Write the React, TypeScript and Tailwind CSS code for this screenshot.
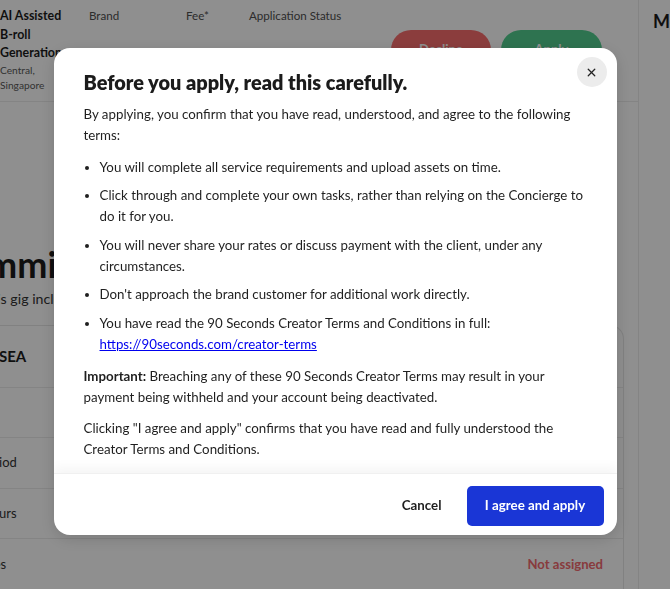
import { X } from "lucide-react";

const bullets = [
  "You will complete all service requirements and upload assets on time.",
  "Click through and complete your own tasks, rather than relying on the Concierge to do it for you.",
  "You will never share your rates or discuss payment with the client, under any circumstances.",
  "Don't approach the brand customer for additional work directly.",
];

function Background() {
  return (
    <div className="flex h-[589px] w-full overflow-hidden bg-white text-[#1c1c1c]">
      <div className="w-[639px] shrink-0 border-r border-[#ececec]">
        {/* table header */}
        <div className="flex h-[102px] items-start border-b border-[#ececec]">
          <div className="w-[89px] shrink-0 pt-[7px]">
            <div className="w-[72px] text-[12.4px] font-bold leading-[18.5px] whitespace-nowrap">
              AI Assisted
              <br />
              B-roll
              <br />
              Generation
            </div>
            <div className="text-[10.2px] leading-[15px] text-[#5a5a5a]">
              Central,
              <br />
              Singapore
            </div>
          </div>
          <div className="w-[97px] shrink-0 pt-[7px] text-[11.6px] text-[#4f4f4f]">Brand</div>
          <div className="w-[63px] shrink-0 pt-[7px] text-[11.6px] text-[#4f4f4f]">Fee*</div>
          <div className="w-[142px] shrink-0 pt-[7px] text-[11.6px] text-[#4f4f4f]">Application Status</div>
          <div className="flex gap-[10px] pt-[30px]">
            <button className="h-[40px] w-[100px] rounded-full bg-[#f86e6e] text-[13px] font-bold text-white">
              Decline
            </button>
            <button className="h-[40px] w-[101px] rounded-full bg-[#52cd8f] text-[13px] font-bold text-white">
              Apply
            </button>
          </div>
        </div>

        {/* commitments */}
        <div className="overflow-hidden pt-[140px]">
          <div className="-ml-[57px] text-[36px] leading-[44px] font-bold whitespace-nowrap">Commitments</div>
          <div className="-ml-[19px] mt-[2px] text-[14.2px] leading-[22px] text-[#333] whitespace-nowrap">
            This gig includes the following deliverables
          </div>
        </div>

        <div className="mt-[15px] mr-[14px] rounded-tr-[14px] border-t border-r border-[#e6e6e6]">
          <div className="flex h-[62px] items-center border-b border-[#ececec]">
            <span className="-ml-[1px] text-[15px] font-bold">SEA</span>
          </div>
          <div className="flex h-[50px] items-center border-b border-[#ececec]" />
          <div className="flex h-[51px] items-center overflow-hidden border-b border-[#ececec]">
            <span className="-ml-[20px] text-[13px] text-[#333]">Period</span>
          </div>
          <div className="flex h-[50px] items-center overflow-hidden border-b border-[#ececec]">
            <span className="-ml-[18px] text-[13px] text-[#333]">Hours</span>
          </div>
          <div className="flex h-[51px] items-center justify-between overflow-hidden pr-[20px]">
            <span className="-ml-[64px] text-[13px] text-[#333]">Deliverables</span>
            <span className="text-[13.1px] font-bold text-[#f26a6e]">Not assigned</span>
          </div>
        </div>
      </div>
      <div className="pl-[14px] pt-[8px] text-[18px] font-bold whitespace-nowrap">Messages</div>
    </div>
  );
}

function TermsModal() {
  return (
    <div className="fixed inset-0 flex items-start justify-center bg-black/[0.44] pt-[48px]">
      <div className="relative flex h-[487px] w-[563px] flex-col overflow-hidden rounded-[16px] bg-white shadow-[0_4px_16px_rgba(0,0,0,0.15)]">
        <button className="absolute top-[9px] right-[10px] flex h-[30px] w-[30px] items-center justify-center rounded-full bg-[#ececec] text-[#222]">
          <X size={13} strokeWidth={2.4} />
        </button>

        <h2 className="px-[30px] pt-[21px] text-[19.9px] leading-[26px] font-extrabold text-[#1b1b1b]">
          Before you apply, read this carefully.
        </h2>

        <div className="flex-1 overflow-hidden px-[30px] pt-[8.5px] text-[13.3px] leading-[21px] text-[#1f1f1f]">
          <p>By applying, you confirm that you have read, understood, and agree to the following terms:</p>
          <ul className="mt-[11px] list-disc space-y-[7.5px] pl-[16px]">
            {bullets.map((b) => (
              <li key={b}>{b}</li>
            ))}
            <li>
              You have read the 90 Seconds Creator Terms and Conditions in full:{" "}
              <a href="#" className="text-[#0000ee] underline">
                https://90seconds.com/creator-terms
              </a>
            </li>
          </ul>
          <p className="mt-[11px]">
            <strong className="font-bold">Important:</strong> Breaching any of these 90 Seconds Creator Terms may
            result in your payment being withheld and your account being deactivated.
          </p>
          <p className="mt-[10px]">
            Clicking "I agree and apply" confirms that you have read and fully understood the Creator Terms and
            Conditions.
          </p>
        </div>

        <div className="flex h-[62px] shrink-0 items-start justify-end gap-[13px] border-t border-[#f0f0f0] pt-[12px] pr-[13px] shadow-[0_-6px_10px_rgba(0,0,0,0.04)]">
          <button className="h-[40px] px-[12px] text-[13.3px] font-bold text-[#1f1f1f]">Cancel</button>
          <button className="h-[40px] w-[137px] rounded-[5px] bg-[#1a36d6] text-[13.3px] font-bold text-white">
            I agree and apply
          </button>
        </div>
      </div>
    </div>
  );
}

export default function App() {
  return (
    <div className="relative font-['Lato',sans-serif]">
      <Background />
      <TermsModal />
    </div>
  );
}
